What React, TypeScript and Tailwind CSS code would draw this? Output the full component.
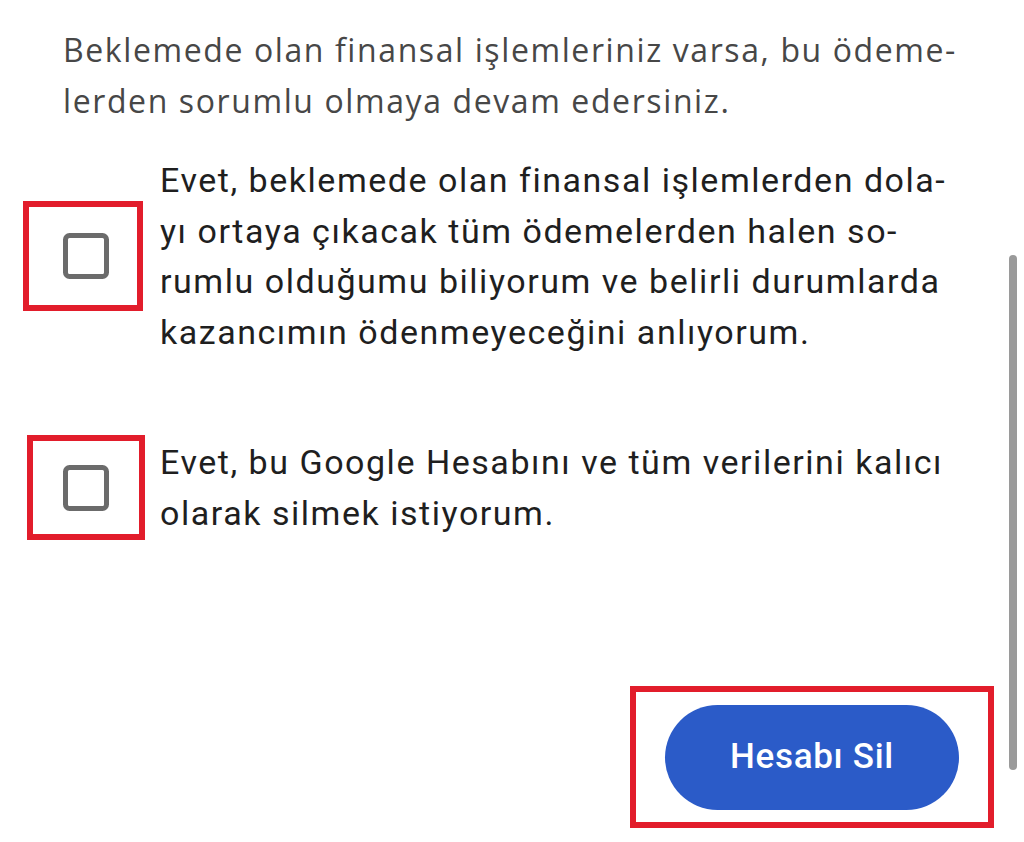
import React from "react";

const Checkbox = () => (
  <svg width="46" height="46" viewBox="0 0 46 46" fill="none">
    <rect x="2.5" y="2.5" width="41" height="41" rx="4" stroke="#6b6b6b" strokeWidth="5" />
  </svg>
);

const Marked = ({ className, children }: { className: string; children: React.ReactNode }) => (
  <div className={"flex items-center justify-center border-[6px] border-[#e21d2b] " + className}>{children}</div>
);

export default function App() {
  return (
    <div className="relative h-[842px] w-[1024px] overflow-hidden bg-white font-['Roboto',sans-serif]">
      <p className="pl-[63px] pt-[24px] font-['Open_Sans',sans-serif] text-[32px] leading-[51px] tracking-[0.05em] text-[#474747]">
        <span className="block whitespace-nowrap">Beklemede olan finansal işlemleriniz varsa, bu ödeme-</span>
        <span className="block whitespace-nowrap">lerden sorumlu olmaya devam edersiniz.</span>
      </p>

      <div className="mt-[29px] flex items-center">
        <div className="w-[160px] pl-[23px]">
          <Marked className="h-[110px] w-[120px] pl-[6px]">
            <Checkbox />
          </Marked>
        </div>
        <p className="text-[34px] leading-[50.5px] tracking-[0.045em] text-[#1f1f1f]">
          <span className="block whitespace-nowrap">Evet, beklemede olan finansal işlemlerden dola-</span>
          <span className="block whitespace-nowrap">yı ortaya çıkacak tüm ödemelerden halen so-</span>
          <span className="block whitespace-nowrap">rumlu olduğumu biliyorum ve belirli durumlarda</span>
          <span className="block whitespace-nowrap">kazancımın ödenmeyeceğini anlıyorum.</span>
        </p>
      </div>

      <div className="mt-[78px] flex items-center">
        <div className="w-[160px] pl-[27px]">
          <Marked className="h-[105px] w-[118px]">
            <Checkbox />
          </Marked>
        </div>
        <p className="text-[34px] leading-[50.5px] tracking-[0.045em] text-[#1f1f1f]">
          <span className="block whitespace-nowrap">Evet, bu Google Hesabını ve tüm verilerini kalıcı</span>
          <span className="block whitespace-nowrap">olarak silmek istiyorum.</span>
        </p>
      </div>

      <div className="mt-[146px] flex justify-end pr-[30px]">
        <Marked className="h-[142px] w-[364px]">
          <button className="h-[105px] w-[294px] rounded-full bg-[#2b5bc8] text-[35px] font-medium tracking-[0.02em] text-white">
            Hesabı Sil
          </button>
        </Marked>
      </div>

      {/* scroll thumb */}
      <div className="absolute left-[1009px] top-[255px] h-[515px] w-[8px] rounded-full bg-[#9a9a9a]" />
    </div>
  );
}
